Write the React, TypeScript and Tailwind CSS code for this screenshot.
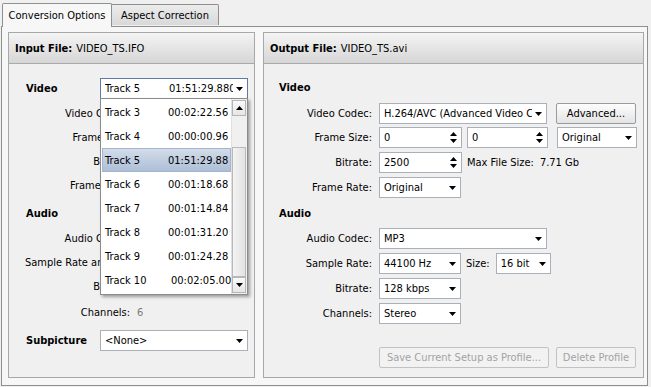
import React from "react";

const FONT = "font-['DejaVu_Sans_Condensed','DejaVu_Sans',sans-serif]";

function Caret() {
  return (
    <svg width="7" height="4" viewBox="0 0 7 4" className="shrink-0">
      <path d="M0 0H7L3.5 4Z" fill="#000" />
    </svg>
  );
}

function SpinArrows() {
  return (
    <svg width="7" height="11" viewBox="0 0 7 11" className="shrink-0">
      <path d="M3.5 0L7 4H0Z" fill="#000" />
      <path d="M0 7H7L3.5 11Z" fill="#000" />
    </svg>
  );
}

function Select({ w, value, focused }: { w: string; value: string; focused?: boolean }) {
  return (
    <div
      className={`${w} h-[21px] shrink-0 bg-white border ${
        focused ? "border-[#5f7aa3]" : "border-[#a9b0b8]"
      } flex items-center pl-[4px] pr-[4px] gap-[3px] overflow-hidden`}
    >
      <span className="flex-1 whitespace-nowrap overflow-hidden">{value}</span>
      <Caret />
    </div>
  );
}

function TrackSelect() {
  return (
    <div className="w-[148px] h-[21px] shrink-0 bg-white border border-[#5f7aa3] flex items-center pl-[4px] pr-[4px] gap-[3px] overflow-hidden">
      <div className="flex-1 whitespace-nowrap overflow-hidden flex">
        <span className="w-[64px] shrink-0">Track 5</span>
        <span>01:51:29.880</span>
      </div>
      <Caret />
    </div>
  );
}

function Spin({ w, value }: { w: string; value: string }) {
  return (
    <div className={`${w} h-[21px] shrink-0 bg-white border border-[#a9b0b8] flex items-center pl-[4px] pr-[4px] overflow-hidden`}>
      <span className="flex-1 whitespace-nowrap">{value}</span>
      <SpinArrows />
    </div>
  );
}

function Button({ w, label, disabled }: { w: string; label: string; disabled?: boolean }) {
  return (
    <div
      className={`${w} h-[21px] shrink-0 rounded-[2px] border flex items-center justify-center whitespace-nowrap ${
        disabled
          ? "border-[#c2c2c2] text-[#a3a3a3] bg-[#f2f2f2]"
          : "border-[#9a9a9a] text-black bg-gradient-to-b from-[#fdfdfd] to-[#e4e4e4]"
      }`}
    >
      {label}
    </div>
  );
}

function LRow({ label, value, left }: { label: string; value?: React.ReactNode; left?: boolean }) {
  return (
    <div className="flex items-center h-[21px] whitespace-nowrap">
      <div className={`w-[128px] shrink-0 pr-[7px] ${left ? "text-left pl-[16px]" : "text-right"}`}>{label}</div>
      <div>{value}</div>
    </div>
  );
}

function RRow({ label, children, className }: { label: string; children: React.ReactNode; className?: string }) {
  return (
    <div className={`flex items-center h-[21px] whitespace-nowrap ${className ?? ""}`}>
      <div className="w-[115px] shrink-0 text-right pr-[7px]">{label}</div>
      {children}
    </div>
  );
}

function GroupHeader({ bold, rest }: { bold: string; rest: string }) {
  return (
    <div className="h-[31px] shrink-0 border-b border-[#a9a9a9] bg-gradient-to-b from-[#f4f4f4] to-[#d6d6d6] flex items-center pl-[6px] whitespace-nowrap">
      <span className="font-bold">{bold}</span>
      <span className="ml-[4px]">{rest}</span>
    </div>
  );
}

const tracks = [
  { name: "Track 3", time: "00:02:22.56", off: "w-[63px]" },
  { name: "Track 4", time: "00:00:00.96", off: "w-[63px]" },
  { name: "Track 5", time: "01:51:29.88", off: "w-[63px]", sel: true },
  { name: "Track 6", time: "00:01:18.68", off: "w-[63px]" },
  { name: "Track 7", time: "00:01:14.84", off: "w-[63px]" },
  { name: "Track 8", time: "00:01:31.20", off: "w-[63px]" },
  { name: "Track 9", time: "00:01:24.28", off: "w-[63px]" },
  { name: "Track 10", time: "00:02:05.00", off: "w-[66px]" },
];

function Dropdown() {
  return (
    <div className="absolute left-[100px] top-[98px] w-[148px] h-[197px] bg-white border border-[#8c8c8c] shadow-[2px_2px_3px_rgba(0,0,0,0.35)] flex">
      <div className="flex-1 flex flex-col pt-[1px] overflow-hidden">
        {tracks.map((t) => (
          <div key={t.name} className="h-[24px] shrink-0 pl-[1px]">
            <div
              className={`h-[24px] flex items-center whitespace-nowrap overflow-hidden ${
                t.sel ? "bg-gradient-to-b from-[#d3dce9] to-[#adbfd7] border border-[#a3b5cf] pl-[2px]" : "pl-[3px]"
              }`}
            >
              <span className={`${t.off} shrink-0`}>{t.name}</span>
              <span>{t.time}</span>
            </div>
          </div>
        ))}
      </div>
      <div className="w-[16px] shrink-0 flex flex-col bg-[#f0f0f0] border-l border-[#e0e0e0] py-[1px] pr-[1px]">
        <div className="h-[16px] shrink-0 border border-[#b5b5b5] bg-gradient-to-b from-[#fafafa] to-[#e6e6e6] flex items-center justify-center">
          <svg width="7" height="4" viewBox="0 0 7 4">
            <path d="M3.5 0L7 4H0Z" fill="#000" />
          </svg>
        </div>
        <div className="h-[31px] shrink-0" />
        <div className="flex-1 border border-[#b9b9b9] bg-gradient-to-r from-[#f3f3f3] to-[#e3e3e3]" />
        <div className="h-[16px] shrink-0 border border-[#b5b5b5] bg-gradient-to-b from-[#fafafa] to-[#e6e6e6] flex items-center justify-center">
          <Caret />
        </div>
      </div>
    </div>
  );
}

export default function App() {
  return (
    <div className={`${FONT} text-[11px] text-black w-[651px] h-[387px] bg-[#f0f0f0] relative overflow-hidden leading-none`}>
      {/* tabs */}
      <div className="h-[26px] flex items-end pl-[2px]">
        <div className="h-[24px] w-[110px] border border-b-0 border-[#8e8f8f] bg-[#f7f7f7] rounded-t-[2px] flex items-center justify-center relative z-10 -mb-[1px] whitespace-nowrap">
          Conversion Options
        </div>
        <div className="h-[21px] w-[107px] border border-b-0 border-l-0 border-[#8e8f8f] bg-gradient-to-b from-[#ececec] to-[#d9d9d9] rounded-tr-[2px] flex items-center justify-center whitespace-nowrap mb-[1px]">
          Aspect Correction
        </div>
      </div>
      {/* tab panel */}
      <div className="ml-[1px] w-[647px] h-[360px] border border-[#8e8f8f] bg-[#f7f7f7] flex gap-[8px] pt-[5px] pl-[6px] pr-[3px] pb-[7px]">
        {/* Left group */}
        <div className="w-[247px] shrink-0 border border-[#a8a8a8] bg-[#f0f0f0] flex flex-col">
          <GroupHeader bold="Input File:" rest="VIDEO_TS.IFO" />
          <div className="flex flex-col pt-[14px]">
            <div className="flex items-center h-[21px]">
              <div className="w-[91px] shrink-0 pl-[17px] font-bold">Video</div>
              <TrackSelect />
            </div>
            <div className="flex flex-col gap-[3px] mt-[4px]">
              <LRow label="Video Codec:" value="MPEG-2" />
              <LRow label="Frame Size:" value="720x480" />
              <LRow label="Bitrate:" value="9800 kbps" />
              <LRow label="Frame Rate:" value="29.97" />
            </div>
            <div className="h-[20px] flex items-center pl-[17px] font-bold mt-[7px]">Audio</div>
            <div className="flex flex-col gap-[3px] mt-[5px]">
              <LRow label="Audio Codec:" value="AC3" />
              <LRow label="Sample Rate and Size:" value="48000 Hz" left />
              <LRow label="Bitrate:" value="448 kbps" />
              <div className="mt-[2px]">
                <LRow label="Channels:" value={<span className="text-[#7a7a7a]">6</span>} />
              </div>
            </div>
            <div className="flex items-center h-[21px] mt-[7px]">
              <div className="w-[91px] shrink-0 pl-[17px] font-bold">Subpicture</div>
              <Select w="w-[148px]" value="<None>" />
            </div>
          </div>
        </div>
        {/* Right group */}
        <div className="flex-1 border border-[#a8a8a8] bg-[#f0f0f0] flex flex-col">
          <GroupHeader bold="Output File:" rest="VIDEO_TS.avi" />
          <div className="flex flex-col pt-[13px]">
            <div className="h-[20px] flex items-center pl-[15px] font-bold">Video</div>
            <RRow label="Video Codec:" className="mt-[6px]">
              <Select w="w-[168px]" value="H.264/AVC (Advanced Video Codec)" />
              <div className="ml-[9px]">
                <Button w="w-[80px]" label="Advanced..." />
              </div>
            </RRow>
            <RRow label="Frame Size:" className="mt-[3px]">
              <Spin w="w-[83px]" value="0" />
              <div className="ml-[5px]">
                <Spin w="w-[81px]" value="0" />
              </div>
              <div className="ml-[9px]">
                <Select w="w-[80px]" value="Original" />
              </div>
            </RRow>
            <RRow label="Bitrate:" className="mt-[4px]">
              <Spin w="w-[83px]" value="2500" />
              <span className="ml-[5px]">Max File Size:</span>
              <span className="ml-[6px]">7.71 Gb</span>
            </RRow>
            <RRow label="Frame Rate:" className="mt-[4px]">
              <Select w="w-[82px]" value="Original" />
            </RRow>
            <div className="h-[20px] flex items-center pl-[15px] font-bold mt-[5px]">Audio</div>
            <RRow label="Audio Codec:" className="mt-[5px]">
              <Select w="w-[168px]" value="MP3" />
            </RRow>
            <RRow label="Sample Rate:" className="mt-[4px]">
              <Select w="w-[82px]" value="44100 Hz" />
              <span className="ml-[5px]">Size:</span>
              <div className="ml-[6px]">
                <Select w="w-[55px]" value="16 bit" />
              </div>
            </RRow>
            <RRow label="Bitrate:" className="mt-[4px]">
              <Select w="w-[82px]" value="128 kbps" />
            </RRow>
            <RRow label="Channels:" className="mt-[4px]">
              <Select w="w-[82px]" value="Stereo" />
            </RRow>
            <div className="flex items-center mt-[23px] pl-[115px]">
              <Button w="w-[170px]" label="Save Current Setup as Profile..." disabled />
              <div className="ml-[7px]">
                <Button w="w-[80px]" label="Delete Profile" disabled />
              </div>
            </div>
          </div>
        </div>
      </div>
      <Dropdown />
    </div>
  );
}
